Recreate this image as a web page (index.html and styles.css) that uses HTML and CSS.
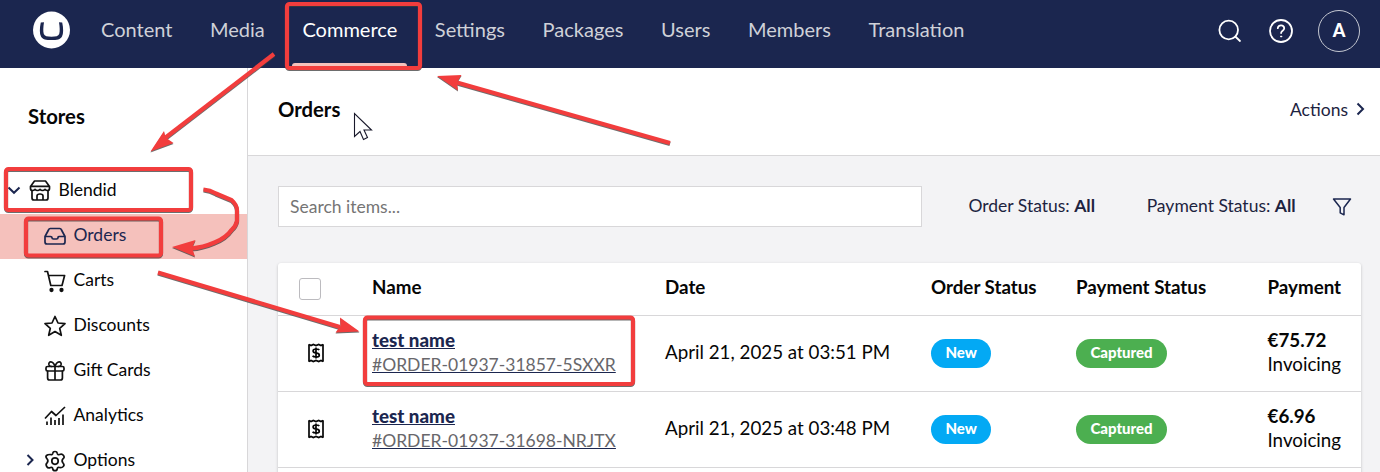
FILE: index.html
```html
<!DOCTYPE html>
<html lang="en">
<head>
<meta charset="utf-8">
<title>Orders</title>
<link rel="stylesheet" href="styles.css">
</head>
<body>
<div class="app">
  <header class="topbar">
    <svg class="logo" width="38" height="38" viewBox="0 0 38 38"><circle cx="19.500" cy="19" r="18.500" fill="#fff"/><path d="M8.800 11.500C7.500 17.500 7.500 22.500 9 25.500C10.600 28.600 14 29 19.500 29S28.400 28.600 30 25.500C31.500 22.500 31.500 17.500 30.200 11.500L27 11.300C27.800 16 28 20.500 27.200 23C26.400 25.200 23.800 25.700 19.500 25.700S12.600 25.200 11.800 23C11 20.500 11.200 16 12 11.300Z" fill="#1b264f"/></svg>
    <nav class="nav">
      <a class="nav-item">Content</a><a class="nav-item">Media</a><a class="nav-item active">Commerce</a><a class="nav-item">Settings</a><a class="nav-item">Packages</a><a class="nav-item">Users</a><a class="nav-item">Members</a><a class="nav-item">Translation</a>
    </nav>
    <div class="tools">
      <svg width="26" height="26" viewBox="0 0 26 26" class="line-icon"><circle cx="11.700" cy="12" r="9.300"/><path d="M18.300 18.500L23 23"/></svg>
      <svg width="26" height="26" viewBox="0 0 26 26" class="line-icon"><circle cx="13" cy="13" r="11"/><path d="M9.800 10.200C10 6.200 16.500 6.600 16.200 10.500C16 12.800 13.200 12.800 13.100 15"/><circle cx="13.100" cy="18.500" r=".6" fill="#fff" stroke-width="1"/></svg>
      <span class="avatar">A</span>
    </div>
  </header>
  <div class="body">
    <aside class="sidebar">
      <h2 class="side-title">Stores</h2>
      <div class="tree">
        <div class="item root"><svg class="caret" width="14" height="14" viewBox="0 0 14 14"><path d="M1.500 4.500L7 9.800L12.500 4.500"/></svg>
          <svg class="icon" width="24" height="24" viewBox="0 0 24 24"><path d="M6.500 2H17.500L21.500 7.500V9.500Q21.500 11.500 19.500 11.500Q18 11.500 17 10.300Q16 11.500 14.500 11.500T12 10.300Q11 11.500 9.500 11.500T7 10.300Q6 11.500 4.500 11.500Q2.500 11.500 2.500 9.500V7.500ZM2.500 7.300H21.500M4 11.500V19Q4 21 6 21H18Q20 21 20 19V11.500M9 21V17Q9 15 12 15T15 17V21"/></svg><span>Blendid</span></div>
        <div class="item selected">
          <svg class="icon" width="24" height="24" viewBox="0 0 24 24"><path d="M2 12.500L5.500 6Q6 4.500 7.300 4.500H16.700Q18 4.500 18.500 6L22 12.500V18Q22 20 20 20H4Q2 20 2 18ZM2 12.500H7.500Q9 12.500 9 13.700T10.500 15H13.500Q15 15 15 13.700T16.500 12.500H22"/></svg><span>Orders</span></div>
        <div class="item">
          <svg class="icon" width="24" height="24" viewBox="0 0 24 24"><path d="M2 2.500H4.500L7.800 16.500H19L21.600 6.500H5.500"/><circle cx="8.500" cy="21" r="1.300" fill="#111"/><circle cx="18.500" cy="21" r="1.300" fill="#111"/></svg><span>Carts</span></div>
        <div class="item">
          <svg class="icon" width="24" height="24" viewBox="0 0 24 24"><path d="M12 2.500L15 9L22 9.600L16.700 14.300L18.300 21.300L12 17.600L5.700 21.300L7.300 14.300L2 9.600L9 9Z"/></svg><span>Discounts</span></div>
        <div class="item">
          <svg class="icon" width="24" height="24" viewBox="0 0 24 24"><rect x="3" y="7.500" width="18" height="4.500" rx="1.500"/><path d="M4.600 12V19Q4.600 21 6.600 21H17.400Q19.400 21 19.400 19V12M12 7.500V21M12 7.500C10 1 5 2 6 6Q6.500 7.500 8.500 7.500M12 7.500C14 1 19 2 18 6Q17.500 7.500 15.500 7.500"/></svg><span>Gift Cards</span></div>
        <div class="item">
          <svg class="icon chart" width="24" height="24" viewBox="0 0 24 24"><path d="M2 14.500L8.500 7.500L13 11.500L22 3"/><path d="M4 21V17.500M8 21V13.500M12 21V16M16 21V14M20 21V10.500"/></svg><span>Analytics</span></div>
        <div class="item expandable"><svg class="caret" width="14" height="14" viewBox="0 0 14 14"><path d="M4.500 2L9.500 7L4.500 12"/></svg>
          <svg class="icon" width="24" height="24" viewBox="0 0 24 24"><path d="M9.800 4.200Q10 2.500 12 2.500T14.200 4.200Q14.600 6.300 16.500 5.500Q19 4.200 20.500 6.500T20 9.800Q18.200 12 20 14T20.300 17.500T16.500 18.500Q14.600 17.800 14.200 19.800Q14 21.700 12 21.700T9.800 19.800Q9.400 17.800 7.500 18.500Q5 19.700 3.700 17.500T4 14Q5.800 12 4 9.800T3.500 6.500T7.500 5.500Q9.400 6.300 9.800 4.200Z"/><circle cx="12" cy="12.100" r="3.200"/></svg><span>Options</span></div>
      </div>
    </aside>
    <main class="main">
      <div class="page-head"><h1 class="page-title">Orders</h1><span class="actions">Actions<svg class="chev" width="14" height="14" viewBox="0 0 14 14"><path d="M4.500 1.500L10 7L4.500 12.500"/></svg></span></div>
      <div class="content">
        <div class="filters">
          <div class="search">Search items...</div>
          <span class="filter">Order Status: <b>All</b></span>
          <span class="filter pay">Payment Status: <b>All</b></span>
          <svg class="funnel" width="20" height="20" viewBox="0 0 20 20"><path d="M1.500 2H18.500L12 10.500V17.800L8.200 15.800V10.500Z"/></svg>
        </div>
        <div class="table">
          <div class="row head"><span class="check"></span><span>Name</span><span>Date</span><span>Order Status</span><span>Payment Status</span><span>Payment</span></div>
          <div class="row">
            <svg class="receipt" width="18" height="20" viewBox="0 0 18 20"><path d="M2 1.200V18.800M16 1.200V18.800"/><path d="M2 1.500L4 2.600L6.300 1.500L9 2.600L11.700 1.500L14 2.600L16 1.500M2 18.500L4 17.400L6.300 18.500L9 17.400L11.700 18.500L14 17.400L16 18.500"/><path d="M9 4.500V15.500M12.300 7Q11.500 6 9 6Q6.100 6 6.100 7.900Q6.100 9.500 9 9.900Q12.300 10.300 12.300 12.200Q12.300 14 9 14Q6.300 14 5.600 12.800"/></svg>
            <a class="order"><b>test name</b><span class="number">#ORDER-01937-31857-5SXXR</span></a>
            <span class="date">April 21, 2025 at 03:51 PM</span><span><i class="badge new">New</i></span><span><i class="badge captured">Captured</i></span>
            <span class="amount"><b>€75.72</b><span>Invoicing</span></span></div>
          <div class="row">
            <svg class="receipt" width="18" height="20" viewBox="0 0 18 20"><path d="M2 1.200V18.800M16 1.200V18.800"/><path d="M2 1.500L4 2.600L6.300 1.500L9 2.600L11.700 1.500L14 2.600L16 1.500M2 18.500L4 17.400L6.300 18.500L9 17.400L11.700 18.500L14 17.400L16 18.500"/><path d="M9 4.500V15.500M12.300 7Q11.500 6 9 6Q6.100 6 6.100 7.900Q6.100 9.500 9 9.900Q12.300 10.300 12.300 12.200Q12.300 14 9 14Q6.300 14 5.600 12.800"/></svg>
            <a class="order"><b>test name</b><span class="number">#ORDER-01937-31698-NRJTX</span></a>
            <span class="date">April 21, 2025 at 03:48 PM</span><span><i class="badge new">New</i></span><span><i class="badge captured">Captured</i></span>
            <span class="amount"><b>€6.96</b><span>Invoicing</span></span></div>
          <div class="row"></div>
        </div>
      </div>
    </main>
  </div>
  <svg class="overlay" width="1380" height="472" viewBox="0 0 1380 472">
    <g class="marks">
      <rect x="287" y="4" width="133" height="64" rx="2.500"/>
      <rect x="6" y="169" width="185" height="41" rx="2.500"/>
      <rect x="26" y="218.500" width="135" height="37" rx="2.500"/>
      <rect x="365" y="317.500" width="268" height="66.500" rx="2.500"/>
      <path d="M274 54L165 138"/><path class="tip" d="M150.500 151.500L164 131L165.500 137.500L173.500 143Z"/>
      <path d="M670 143L457 82.500"/><path class="tip" d="M437 76L461.500 75L457 82.500L458 90.500Z"/>
      <path d="M158 272.500L340 327"/><path class="tip" d="M359.500 331.500L340 317.500L340.500 326L335.500 332.500Z"/>
      <path d="M203.500 189.500Q210 190 216 193.500L231.500 200Q237 205 237 210V221Q236 226 231.500 230Q226 238 214.500 242.500Q203 247.500 191 248.500"/><path class="tip" d="M172 247L195.500 240L192 248L195 256.500Z"/>
    </g>
    <path d="M354.500 113.500V136.500L360 131.500L363.500 139.500L367.500 137.500L364 130H371.500Z" fill="#fff" stroke="#19192b" stroke-width="1.100"/>
  </svg>
</div>
</body>
</html>
```
FILE: styles.css
```css
* { box-sizing: border-box; }
body { margin: 0; font-family: Lato, "Open Sans", sans-serif; font-size: 18.75px; color: #060606; background: #f3f3f5; }
.app { position: relative; width: 1380px; height: 472px; overflow: hidden; }
.topbar { display: flex; align-items: center; height: 68px; padding: 0 20px 0 32px; background: #1b264f; }
.logo { margin-bottom: 8px; margin-right: 21px; }
.nav { display: flex; height: 68px; gap: 17.65px; }
.nav-item { position: relative; padding: 0 10px 9px; line-height: 59px; font-size: 20px; color: #cfd1d8; }
.nav-item.active { color: #fff; }
.nav-item.active::after { content: ""; position: absolute; left: 0; right: 0; bottom: 0; height: 5px; border-radius: 3px 3px 0 0; background: #f5c1bc; }
.tools { display: flex; align-items: center; margin-left: auto; gap: 25px; padding-bottom: 6px; }
.line-icon { fill: none; stroke: #fff; stroke-width: 1.8; stroke-linecap: round; }
.avatar { margin-left: -1px; width: 42px; height: 42px; border: 1px solid #c4c7d1; border-radius: 50%; color: #fff; font-weight: 900; font-size: 18px; line-height: 38px; text-align: center; }
.body { display: flex; height: 404px; }
.sidebar { width: 248px; flex: none; border-right: 1px solid #d8d7d9; background: #fff; }
.side-title { margin: 0; padding: 36px 28px 0; height: 101px; font-size: 20.3px; line-height: 24px; font-weight: 700; }
.item { display: flex; align-items: center; height: 45px; padding: 0 0 3px 42.5px; font-size: 17.5px; gap: 7px; }
.item span { line-height: 24px; }
.icon { fill: none; stroke: #111; stroke-width: 1.7; stroke-linejoin: round; stroke-linecap: round; position: relative; top: 1px; }
.chart { stroke-linecap: butt; }
.root { padding-left: 6.5px; }
.item .caret { margin-right: -1px; }
.root .caret { margin-right: 0; }
.caret, .chev { fill: none; stroke: #1b264f; stroke-width: 2; }
.selected { background: #f5c1bc; color: #1b264f; }
.selected .icon { stroke: #1b264f; }
.expandable { padding-left: 22.5px; }
.main { flex: 1; display: flex; flex-direction: column; }
.page-head { flex: none; display: flex; justify-content: space-between; align-items: center; height: 88px; padding: 0 12px 5px 30px; background: #fff; border-bottom: 1px solid #d8d7d9; }
.page-title { margin: 0; font-size: 20.3px; line-height: 24px; font-weight: 700; }
.actions { display: flex; align-items: center; gap: 6px; font-size: 17.5px; color: #1d2340; }
.chev { margin-left: -1px; margin-right: 1px; }
.content { padding: 30px 19px 0 30px; }
.filters { display: flex; align-items: center; height: 41px; font-size: 17.5px; color: #1d2340; }
.search { width: 644px; height: 41px; padding-left: 11px; border: 1px solid #d8d7d9; background: #fff; color: #757575; line-height: 39px; }
.filter { margin-left: 46.4px; padding-bottom: 2px; }
.filter.pay { margin-left: 51.6px; }
.funnel { margin-left: 36px; fill: none; stroke: #1b264f; stroke-width: 1.5; stroke-linejoin: round; }
.table { width: 1083px; margin-top: 36px; height: 240px; background: #fff; border-radius: 3px; box-shadow: 0 1px 3px rgba(0,0,0,.22); }
.row { display: grid; grid-template-columns: 73px 293px 266px 145px 191.5px 94px; align-items: center; height: 76px; padding-left: 21px; border-bottom: 1px solid #d8d7d9; }
.head { height: 53px; font-weight: 700; padding-bottom: 5px; }
.check { width: 22px; height: 22px; border: 1px solid #bcbbbf; border-radius: 3px; position: relative; top: 2px; }
.receipt { margin-left: 7.5px; margin-bottom: 1px; fill: none; stroke: #060606; stroke-width: 1.7; }
.order, .amount { display: flex; flex-direction: column; line-height: 24px; padding-bottom: 3px; }
.date { padding-bottom: 4px; }
.order b { font-weight: 900; color: #1b264f; text-decoration: underline; }
.order .number { padding-top: 1px; margin-bottom: -1px; font-size: 17.5px; color: #68676b; text-decoration: underline #1b264f; }
.badge { display: inline-block; height: 29px; padding: 0 14.4px; border-radius: 15px; font-size: 15px; font-style: normal; font-weight: 900; line-height: 27px; color: #fff; vertical-align: middle; }
.new { background: #03a9f4; }
.captured { background: #4caf50; }
.overlay { position: absolute; left: 0; top: 0; }
.marks { fill: none; stroke: #f23d3d; stroke-width: 4.2; filter: drop-shadow(.5px 1px .6px rgba(60,60,60,.75)); }
.tip { fill: #f23d3d; stroke: none; }
```
